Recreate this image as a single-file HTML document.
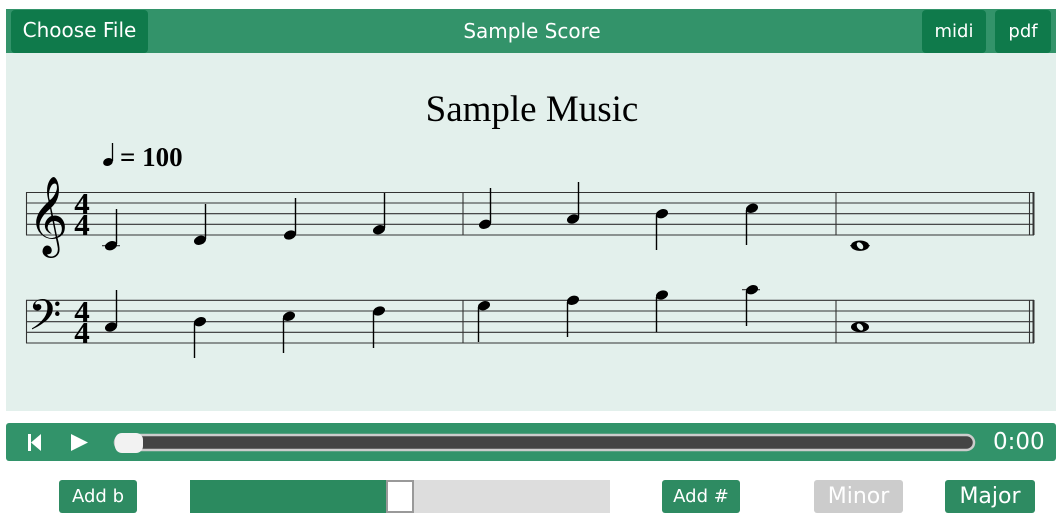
<!DOCTYPE html><html><head><style>
body{margin:0;width:1064px;height:521px;background:#fff;font-family:"DejaVu Sans","Liberation Sans",sans-serif;position:relative;overflow:hidden}
.a{position:absolute}
.btn{position:absolute;background:#0f7a4b;color:#fff;border-radius:4px;text-align:center}
.g{position:absolute;background:#2e8b62;color:#fff;border-radius:3px;text-align:center;font-size:18px}
</style></head><body>
<div class="a" style="left:6px;top:9px;width:1050px;height:44px;background:#33936a"></div>
<div class="btn" style="left:11px;top:10px;width:137px;height:43px;line-height:41px;font-size:20px">Choose File</div>
<div class="a" style="left:0;width:1064px;top:9px;line-height:44px;text-align:center;color:#fff;font-size:20px">Sample Score</div>
<div class="btn" style="left:922px;top:10px;width:64px;height:43px;line-height:43px;font-size:18px">midi</div>
<div class="btn" style="left:995px;top:10px;width:56px;height:43px;line-height:43px;font-size:18px">pdf</div>
<div class="a" style="left:6px;top:53px;width:1050px;height:358px;background:#e3f0ec"></div>
<svg class="a" style="left:0;top:0" width="1064" height="420">
<text x="532" y="121" text-anchor="middle" font-family="Liberation Serif" font-size="37">Sample Music</text>
<ellipse cx="108" cy="162" rx="5" ry="3.8" transform="rotate(-20 108 162)"/><line x1="112.5" y1="161" x2="112.5" y2="143" stroke="#000" stroke-width="1.3"/>
<text x="120" y="166" font-family="Liberation Serif" font-weight="bold" font-size="27">= 100</text>
<g stroke="#333" stroke-width="1.1">
<line x1="26" y1="192.5" x2="1034" y2="192.5"/><line x1="26" y1="203" x2="1034" y2="203"/><line x1="26" y1="213.7" x2="1034" y2="213.7"/><line x1="26" y1="224.3" x2="1034" y2="224.3"/><line x1="26" y1="235" x2="1034" y2="235"/>
<line x1="26" y1="300.3" x2="1034" y2="300.3"/><line x1="26" y1="311" x2="1034" y2="311"/><line x1="26" y1="321.7" x2="1034" y2="321.7"/><line x1="26" y1="332.3" x2="1034" y2="332.3"/><line x1="26" y1="343" x2="1034" y2="343"/>
<line x1="26.5" y1="192" x2="26.5" y2="235"/><line x1="26.5" y1="300" x2="26.5" y2="343"/>
<line x1="463" y1="192" x2="463" y2="235"/><line x1="463" y1="300" x2="463" y2="343"/>
<line x1="836" y1="192" x2="836" y2="235"/><line x1="836" y1="300" x2="836" y2="343"/>
<line x1="1029.5" y1="192" x2="1029.5" y2="235"/><line x1="1029.5" y1="300" x2="1029.5" y2="343"/>
<line x1="1033.5" y1="192" x2="1033.5" y2="235" stroke-width="2"/><line x1="1033.5" y1="300" x2="1033.5" y2="343" stroke-width="2"/>
<line x1="102" y1="245.7" x2="120" y2="245.7"/><line x1="742" y1="289.7" x2="760" y2="289.7"/><line x1="850" y1="245.7" x2="870" y2="245.7"/>
</g>
<text x="28" y="238" font-family="DejaVu Sans" font-size="68">𝄞</text>
<text x="28" y="338" font-family="DejaVu Sans" font-size="52">𝄢</text>
<g font-family="Liberation Serif" font-weight="bold" font-size="31" text-anchor="middle">
<text x="82" y="214">4</text><text x="82" y="235">4</text><text x="82" y="322">4</text><text x="82" y="343">4</text></g>
<g fill="#000" stroke="#000" stroke-width="1.4">
<g><ellipse cx="111" cy="245.7" rx="6.2" ry="4.4" transform="rotate(-20 111 245.7)" stroke="none"/><line x1="116.5" y1="244" x2="116.5" y2="209"/></g>
<g><ellipse cx="200" cy="240.3" rx="6.2" ry="4.4" transform="rotate(-20 200 240.3)" stroke="none"/><line x1="205.5" y1="239" x2="205.5" y2="204"/></g>
<g><ellipse cx="290" cy="235" rx="6.2" ry="4.4" transform="rotate(-20 290 235)" stroke="none"/><line x1="295.5" y1="234" x2="295.5" y2="198"/></g>
<g><ellipse cx="379" cy="229.7" rx="6.2" ry="4.4" transform="rotate(-20 379 229.7)" stroke="none"/><line x1="384.5" y1="228" x2="384.5" y2="193"/></g>
<g><ellipse cx="485" cy="224.3" rx="6.2" ry="4.4" transform="rotate(-20 485 224.3)" stroke="none"/><line x1="490.5" y1="223" x2="490.5" y2="188"/></g>
<g><ellipse cx="573" cy="219" rx="6.2" ry="4.4" transform="rotate(-20 573 219)" stroke="none"/><line x1="578.5" y1="218" x2="578.5" y2="182"/></g>
<g><ellipse cx="662" cy="213.7" rx="6.2" ry="4.4" transform="rotate(-20 662 213.7)" stroke="none"/><line x1="656.5" y1="215" x2="656.5" y2="250"/></g>
<g><ellipse cx="752" cy="208.3" rx="6.2" ry="4.4" transform="rotate(-20 752 208.3)" stroke="none"/><line x1="746.5" y1="210" x2="746.5" y2="245"/></g>
<g><ellipse cx="111" cy="327" rx="6.2" ry="4.4" transform="rotate(-20 111 327)" stroke="none"/><line x1="116.5" y1="326" x2="116.5" y2="290"/></g>
<g><ellipse cx="200" cy="321.7" rx="6.2" ry="4.4" transform="rotate(-20 200 321.7)" stroke="none"/><line x1="194.5" y1="323" x2="194.5" y2="358"/></g>
<g><ellipse cx="289" cy="316.3" rx="6.2" ry="4.4" transform="rotate(-20 289 316.3)" stroke="none"/><line x1="283.5" y1="318" x2="283.5" y2="353"/></g>
<g><ellipse cx="379" cy="311" rx="6.2" ry="4.4" transform="rotate(-20 379 311)" stroke="none"/><line x1="373.5" y1="312" x2="373.5" y2="348"/></g>
<g><ellipse cx="484" cy="305.7" rx="6.2" ry="4.4" transform="rotate(-20 484 305.7)" stroke="none"/><line x1="478.5" y1="307" x2="478.5" y2="342"/></g>
<g><ellipse cx="573" cy="300.3" rx="6.2" ry="4.4" transform="rotate(-20 573 300.3)" stroke="none"/><line x1="567.5" y1="302" x2="567.5" y2="337"/></g>
<g><ellipse cx="662" cy="295" rx="6.2" ry="4.4" transform="rotate(-20 662 295)" stroke="none"/><line x1="656.5" y1="297" x2="656.5" y2="332"/></g>
<g><ellipse cx="752" cy="289.7" rx="6.2" ry="4.4" transform="rotate(-20 752 289.7)" stroke="none"/><line x1="746.5" y1="291" x2="746.5" y2="326"/></g>
</g>
<ellipse cx="860" cy="245.7" rx="9" ry="5.2"/><ellipse cx="860" cy="245.7" rx="2.6" ry="4" transform="rotate(-40 860 245.7)" fill="#e3f0ec"/>
<ellipse cx="860" cy="327" rx="9" ry="5.2"/><ellipse cx="860" cy="327" rx="2.6" ry="4" transform="rotate(-40 860 327)" fill="#e3f0ec"/>
</svg>
<div class="a" style="left:6px;top:423px;width:1050px;height:38px;background:#32936a;border-radius:3px"></div>
<svg class="a" style="left:0;top:423px" width="1064" height="38">
<rect x="28" y="11" width="3" height="17" fill="#fff"/><polygon points="31,19.5 41,11 41,28" fill="#fff"/>
<polygon points="71,11 88,19.5 71,28" fill="#fff"/>
<rect x="115" y="12" width="859" height="15" rx="7.5" fill="#444" stroke="#ccc" stroke-width="2.5"/>
<rect x="115" y="10" width="28" height="20" rx="7" fill="#f2f2f2"/>
</svg>
<div class="a" style="left:993px;top:423px;line-height:38px;color:#fff;font-size:23px">0:00</div>
<div class="g" style="left:59px;top:480px;width:78px;height:33px;line-height:33px">Add b</div>
<div class="a" style="left:190px;top:480px;width:420px;height:33px;background:#ddd"></div>
<div class="a" style="left:190px;top:480px;width:200px;height:33px;background:#2b8a5f"></div>
<div class="a" style="left:386px;top:480px;width:24px;height:29px;background:#fff;border:2px solid #999"></div>
<div class="g" style="left:662px;top:480px;width:78px;height:33px;line-height:33px">Add #</div>
<div class="g" style="left:814px;top:480px;width:89px;height:33px;line-height:33px;background:#ccc;font-size:22px">Minor</div>
<div class="g" style="left:945px;top:480px;width:90px;height:33px;line-height:33px;font-size:22px">Major</div>
</body></html>
